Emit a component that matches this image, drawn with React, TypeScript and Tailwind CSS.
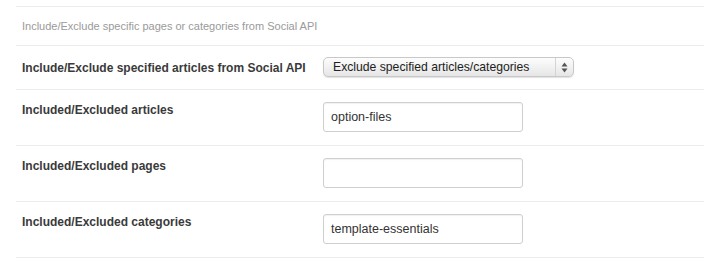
const rows = [
  { label: "Included/Excluded articles", value: "option-files" },
  { label: "Included/Excluded pages", value: "" },
  { label: "Included/Excluded categories", value: "template-essentials" },
];

const Stepper = () => (
  <svg width="7" height="11" viewBox="0 0 7 11">
    <path d="M3.5 0.5 L6.5 4.5 L0.5 4.5 Z" fill="#555" />
    <path d="M3.5 10.5 L6.5 6.5 L0.5 6.5 Z" fill="#555" />
  </svg>
);

export default function App() {
  return (
    <div className="w-[704px] h-[268px] bg-white pl-4 pt-[6px] font-['Liberation_Sans',Arial,sans-serif]">
      <div className="border-t border-[#ececec] h-[39px] flex items-center pl-[6px]">
        <p className="text-[11px] text-[#9a9a9a]">Include/Exclude specific pages or categories from Social API</p>
      </div>

      <div className="border-t border-[#ececec] h-[44px] flex items-start pt-[11px]">
        <span className="w-[307px] pl-[6px] pt-[2px] text-[12px] font-bold text-[#3a3a3a]">
          Include/Exclude specified articles from Social API
        </span>
        <div className="w-[251px] h-[20px] rounded-[5px] border border-[#c8c8c8] bg-gradient-to-b from-[#fdfdfd] to-[#e6e6e6] shadow-[0_1px_1px_rgba(0,0,0,0.12)] flex items-center">
          <span className="flex-1 pl-[9px] text-[12.2px] text-[#222] leading-none">
            Exclude specified articles/categories
          </span>
          <div className="w-[18px] h-full border-l border-[#d4d4d4] flex items-center justify-center">
            <Stepper />
          </div>
        </div>
      </div>

      {rows.map((r) => (
        <div key={r.label} className="border-t border-[#ececec] h-[56px] flex items-start pt-[11px]">
          <span className="w-[307px] pl-[6px] pt-0 text-[12px] font-bold text-[#3a3a3a]">{r.label}</span>
          <div className="mt-px w-[200px] h-[30px] rounded-[3px] border border-[#cfcfcf] shadow-[inset_0_1px_1px_rgba(0,0,0,0.06)] flex items-center px-[7px]">
            <span className="text-[12.5px] text-[#333]">{r.value}</span>
          </div>
        </div>
      ))}
      <div className="border-t border-[#ececec]" />
    </div>
  );
}
